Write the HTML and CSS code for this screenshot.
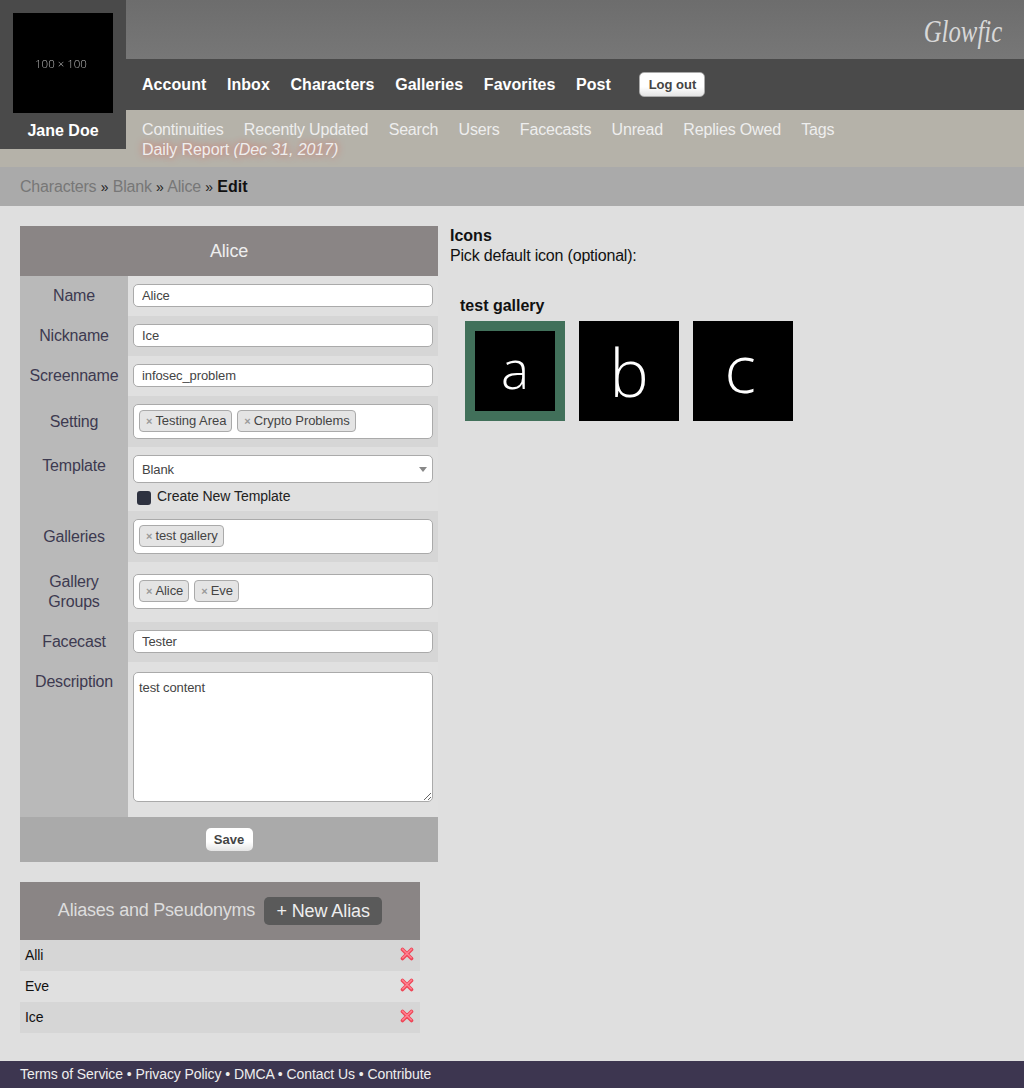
FILE: index.html
```html
<!DOCTYPE html>
<html lang="en">
<head>
    <meta charset="UTF-8">
    <meta name="viewport" content="width=device-width, initial-scale=1.0">
    <title>Glowfic | Alice</title>
    <link rel="stylesheet" href="styles.css">
</head>
<body>
    <header class="header">
        <div class="profile">
            <div class="avatar"><span class="avatar-label">100 × 100</span></div>
            <div class="username">Jane Doe</div>
        </div>
        <div class="header-main">
            <div class="logo-bar"><span class="logo">Glowfic</span></div>
            <nav class="nav">
                <a href="#">Account</a>
                <a href="#">Inbox</a>
                <a href="#">Characters</a>
                <a href="#">Galleries</a>
                <a href="#">Favorites</a>
                <a href="#">Post</a>
                <button class="button logout" type="button">Log out</button>
            </nav>
            <nav class="subnav">
                <div class="subnav-links">
                    <a href="#">Continuities</a>
                    <a href="#">Recently Updated</a>
                    <a href="#">Search</a>
                    <a href="#">Users</a>
                    <a href="#">Facecasts</a>
                    <a href="#">Unread</a>
                    <a href="#">Replies Owed</a>
                    <a href="#">Tags</a>
                </div>
                <a href="#" class="daily-report">Daily Report <em>(Dec 31, 2017)</em></a>
            </nav>
        </div>
    </header>

    <div class="breadcrumbs">
        <a href="#">Characters</a> <span class="sep">»</span>
        <a href="#">Blank</a> <span class="sep">»</span>
        <a href="#">Alice</a> <span class="sep">»</span>
        <b>Edit</b>
    </div>

    <main class="content">
        <div class="left-column">
            <table class="form-table">
                <colgroup>
                    <col class="label-col">
                    <col>
                </colgroup>
                <thead>
                    <tr><th colspan="2" class="table-title">Alice</th></tr>
                </thead>
                <tbody>
                    <tr class="odd">
                        <th>Name</th>
                        <td><input class="text-input" type="text" value="Alice"></td>
                    </tr>
                    <tr class="even">
                        <th>Nickname</th>
                        <td><input class="text-input" type="text" value="Ice"></td>
                    </tr>
                    <tr class="odd">
                        <th>Screenname</th>
                        <td><input class="text-input" type="text" value="infosec_problem"></td>
                    </tr>
                    <tr class="even">
                        <th>Setting</th>
                        <td class="tag-cell">
                            <div class="tag-box">
                                <span class="tag"><i>×</i>Testing Area</span>
                                <span class="tag"><i>×</i>Crypto Problems</span>
                            </div>
                        </td>
                    </tr>
                    <tr class="odd">
                        <th class="top">Template</th>
                        <td class="template-cell">
                            <div class="select-wrap">
                                <select class="select-input"><option>Blank</option></select>
                            </div>
                            <label class="check-row"><span class="checkbox"></span>Create New Template</label>
                        </td>
                    </tr>
                    <tr class="even">
                        <th>Galleries</th>
                        <td class="tag-cell">
                            <div class="tag-box">
                                <span class="tag"><i>×</i>test gallery</span>
                            </div>
                        </td>
                    </tr>
                    <tr class="odd">
                        <th>Gallery<br>Groups</th>
                        <td class="groups-cell">
                            <div class="tag-box">
                                <span class="tag"><i>×</i>Alice</span>
                                <span class="tag"><i>×</i>Eve</span>
                            </div>
                        </td>
                    </tr>
                    <tr class="even">
                        <th>Facecast</th>
                        <td><input class="text-input" type="text" value="Tester"></td>
                    </tr>
                    <tr class="odd">
                        <th class="top description-label">Description</th>
                        <td class="description-cell"><textarea class="text-area">test content</textarea></td>
                    </tr>
                </tbody>
                <tfoot>
                    <tr>
                        <td colspan="2" class="form-footer"><button class="button save" type="button">Save</button></td>
                    </tr>
                </tfoot>
            </table>

            <section class="aliases">
                <div class="aliases-title">
                    Aliases and Pseudonyms
                    <a href="#" class="new-alias">+ New Alias</a>
                </div>
                <div class="alias-row even">
                    <span>Alli</span>
                    <svg class="delete-icon" viewBox="0 0 14 14"><path class="x-base" d="M2.5 2.5 11.5 11.5M11.5 2.5 2.5 11.5"/><path class="x-light" d="M2.5 2.2 11.2 10.8M11.5 2.2 2.8 10.8"/></svg>
                </div>
                <div class="alias-row odd">
                    <span>Eve</span>
                    <svg class="delete-icon" viewBox="0 0 14 14"><path class="x-base" d="M2.5 2.5 11.5 11.5M11.5 2.5 2.5 11.5"/><path class="x-light" d="M2.5 2.2 11.2 10.8M11.5 2.2 2.8 10.8"/></svg>
                </div>
                <div class="alias-row even">
                    <span>Ice</span>
                    <svg class="delete-icon" viewBox="0 0 14 14"><path class="x-base" d="M2.5 2.5 11.5 11.5M11.5 2.5 2.5 11.5"/><path class="x-light" d="M2.5 2.2 11.2 10.8M11.5 2.2 2.8 10.8"/></svg>
                </div>
            </section>
        </div>

        <section class="icons-column">
            <b>Icons</b>
            <p>Pick default icon (optional):</p>
            <div class="gallery">
                <b class="gallery-name">test gallery</b>
                <div class="icon-list">
                    <div class="icon selected"><span>a</span></div>
                    <div class="icon icon-tall"><span>b</span></div>
                    <div class="icon icon-narrow"><span>c</span></div>
                </div>
            </div>
        </section>
    </main>

    <footer class="footer">
        <a href="#">Terms of Service</a> •
        <a href="#">Privacy Policy</a> •
        <a href="#">DMCA</a> •
        <a href="#">Contact Us</a> •
        <a href="#">Contribute</a>
    </footer>
</body>
</html>
```

FILE: styles.css
```css
* {
    box-sizing: border-box;
}
html, body {
    height: 100%;
}
body {
    margin: 0;
    display: flex;
    flex-direction: column;
    min-height: 1088px;
    font-family: "Liberation Sans", Arial, sans-serif;
    font-size: 16px;
    line-height: 20px;
    letter-spacing: -0.19px;
    color: #111;
    background-color: #dfdfdf;
}
a {
    color: inherit;
    text-decoration: none;
}
b {
    letter-spacing: 0;
}

/* header */
.header {
    display: flex;
    height: 167px;
    background-color: #b5b2a9;
}
.profile {
    width: 126px;
    height: 149px;
    padding-top: 13px;
    background-color: #4a4a4a;
}
.avatar {
    display: flex;
    align-items: center;
    justify-content: center;
    width: 100px;
    height: 100px;
    margin: 0 auto;
    padding: 2px 4px 0 0;
    background-color: #000;
    color: #bbb;
    font-family: "Open Sans", sans-serif;
    font-weight: 300;
    font-size: 11.5px;
    letter-spacing: 0;
}
.avatar-label {
    will-change: transform;
}
.username {
    margin-top: 8px;
    text-align: center;
    color: #fff;
    font-weight: bold;
    letter-spacing: 0;
}
.header-main {
    flex: 1;
}
.logo-bar {
    display: flex;
    justify-content: flex-end;
    height: 59px;
    padding: 15px 22px 0 0;
    background: linear-gradient(#6d6d6d, #777);
}
.logo {
    font-family: "Liberation Serif", serif;
    font-style: italic;
    font-size: 31px;
    line-height: 34px;
    letter-spacing: 0;
    color: #d8d8d8;
    transform: scaleX(0.8);
    transform-origin: right center;
}
.nav {
    display: flex;
    align-items: center;
    gap: 20.6px;
    height: 51px;
    padding-left: 16px;
    background-color: #4a4a4a;
    color: #fff;
    font-weight: bold;
    letter-spacing: 0.05px;
}
.button {
    font-family: "Liberation Sans", Arial, sans-serif;
    font-size: 13px;
    font-weight: bold;
    letter-spacing: 0;
    color: #444;
    background: linear-gradient(#fff 60%, #e4e4e4);
    border-radius: 5px;
}
.logout {
    width: 66px;
    height: 25px;
    margin: 0 0 0 8px;
    padding: 0;
    border: 1px solid #aaa;
}
.subnav {
    height: 57px;
    padding: 10px 0 0 16px;
    color: #eee;
}
.subnav-links {
    display: flex;
    gap: 20.3px;
    letter-spacing: -0.17px;
}
.daily-report {
    display: inline-block;
    letter-spacing: -0.08px;
    text-shadow: 0 0 7px #dd6558;
}

/* breadcrumbs */
.breadcrumbs {
    height: 39px;
    padding: 10px 20px 0;
    background-color: #aaa;
    color: #777;
}
.breadcrumbs .sep {
    color: #222;
    font-size: 14px;
    letter-spacing: 0;
}
.breadcrumbs b {
    color: #111;
}

/* main */
.content {
    flex: 1;
    display: flex;
    padding: 20px 20px 0;
}
.left-column {
    width: 418px;
}

/* form table */
.form-table {
    width: 418px;
    border-collapse: collapse;
    table-layout: fixed;
}
.label-col {
    width: 108px;
}
.form-table .table-title {
    height: 50px;
    padding: 0;
    background-color: #8a8585;
    color: #eee;
    font-size: 18px;
    font-weight: normal;
    text-align: center;
}
.form-table tbody th {
    padding: 0;
    background-color: #b9b9b9;
    color: #3d3a50;
    font-weight: normal;
    text-align: center;
}
.form-table tbody th.top {
    padding-top: 9px;
    vertical-align: top;
}
.form-table tbody th.description-label {
    padding-top: 10px;
}
.form-table td {
    height: 40px;
    padding: 8px 5px 9px;
}
.odd {
    background-color: #e0e0e0;
}
.even {
    background-color: #d6d6d6;
}
.text-input,
.select-input,
.text-area,
.tag-box {
    display: block;
    width: 100%;
    border: 1px solid #aaa;
    border-radius: 5px;
    background-color: #fff;
    color: #444;
    font-family: "Liberation Sans", Arial, sans-serif;
    font-size: 13px;
    letter-spacing: -0.1px;
}
.text-input {
    height: 23px;
    padding: 0 8px;
}
.tag-box {
    display: flex;
    gap: 5px;
    height: 35px;
    padding: 5px;
}
.tag {
    height: 22px;
    padding: 1px 5px 0 6px;
    border: 1px solid #aaa;
    border-radius: 4px;
    background-color: #e4e4e4;
    line-height: 18px;
    letter-spacing: -0.05px;
    white-space: nowrap;
}
.tag i {
    margin-right: 3px;
    color: #999;
    font-style: normal;
    font-weight: bold;
    font-size: 11px;
}
.form-table .tag-cell {
    padding-bottom: 8px;
}
.form-table .groups-cell {
    padding-top: 12px;
    padding-bottom: 13px;
}
.form-table .template-cell {
    padding-bottom: 5px;
}
.select-wrap {
    position: relative;
}
.select-wrap::after {
    content: "";
    position: absolute;
    top: 12px;
    right: 6px;
    border-style: solid;
    border-width: 5px 4.5px 0;
    border-color: #888 transparent transparent;
}
.select-input {
    height: 28px;
    padding: 0 8px;
    appearance: none;
}
.check-row {
    display: flex;
    align-items: center;
    gap: 6px;
    margin: 3px 0 0 4px;
    color: #222;
    font-size: 14px;
    letter-spacing: -0.05px;
}
.checkbox {
    width: 14px;
    height: 14px;
    margin-top: 4px;
    border-radius: 3px;
    background-color: #2e3240;
}
.form-table .description-cell {
    padding-top: 10px;
    padding-bottom: 15px;
}
.text-area {
    height: 130px;
    padding: 7px 5px;
    line-height: 16px;
}
.form-table .form-footer {
    height: 45px;
    padding: 0;
    background-color: #aaa;
    text-align: center;
}
.save {
    width: 47px;
    height: 23px;
    padding: 0;
    border: 0;
}

/* aliases */
.aliases {
    width: 400px;
    margin-top: 20px;
}
.aliases-title {
    display: flex;
    align-items: center;
    justify-content: center;
    gap: 9px;
    height: 58px;
    padding-bottom: 2px;
    background-color: #8a8585;
    color: #ddd;
    font-size: 18px;
    letter-spacing: -0.22px;
}
.new-alias {
    width: 118px;
    height: 28px;
    margin-top: 2px;
    border-radius: 5px;
    background-color: #5a5a5a;
    color: #eee;
    line-height: 28px;
    letter-spacing: -0.1px;
    text-align: center;
}
.alias-row {
    display: flex;
    align-items: center;
    justify-content: space-between;
    height: 31px;
    padding: 0 6px 2px 5px;
    font-size: 14px;
    letter-spacing: -0.1px;
}
.delete-icon {
    width: 14px;
    height: 14px;
    margin-top: -2px;
}
.x-base {
    fill: none;
    stroke: #ee4455;
    stroke-width: 3.6;
    stroke-linecap: round;
}
.x-light {
    fill: none;
    stroke: #ff8090;
    stroke-width: 1.6;
    stroke-linecap: round;
}

/* icons */
.icons-column {
    margin-left: 12px;
}
.icons-column p {
    margin: 0;
}
.gallery {
    margin-top: 30px;
    padding-left: 10px;
}
.gallery-name {
    display: block;
}
.icon-list {
    display: flex;
    gap: 14px;
    margin: 5px 0 0 5px;
}
.icon {
    display: flex;
    align-items: center;
    justify-content: center;
    width: 100px;
    height: 100px;
    background-color: #000;
    color: #fff;
    font-family: "Open Sans", sans-serif;
    font-weight: 300;
    font-size: 66px;
    line-height: 1;
}
.icon-narrow span {
    margin: -8px 6px 0 0;
}
.selected {
    border: 10px solid #41705a;
    font-size: 53px;
}
.selected span {
    margin-top: -6px;
}

/* footer */
.footer {
    height: 27px;
    padding: 3px 20px 0;
    background-color: #3d3650;
    color: #eee;
    font-size: 14px;
    letter-spacing: -0.08px;
}
```
